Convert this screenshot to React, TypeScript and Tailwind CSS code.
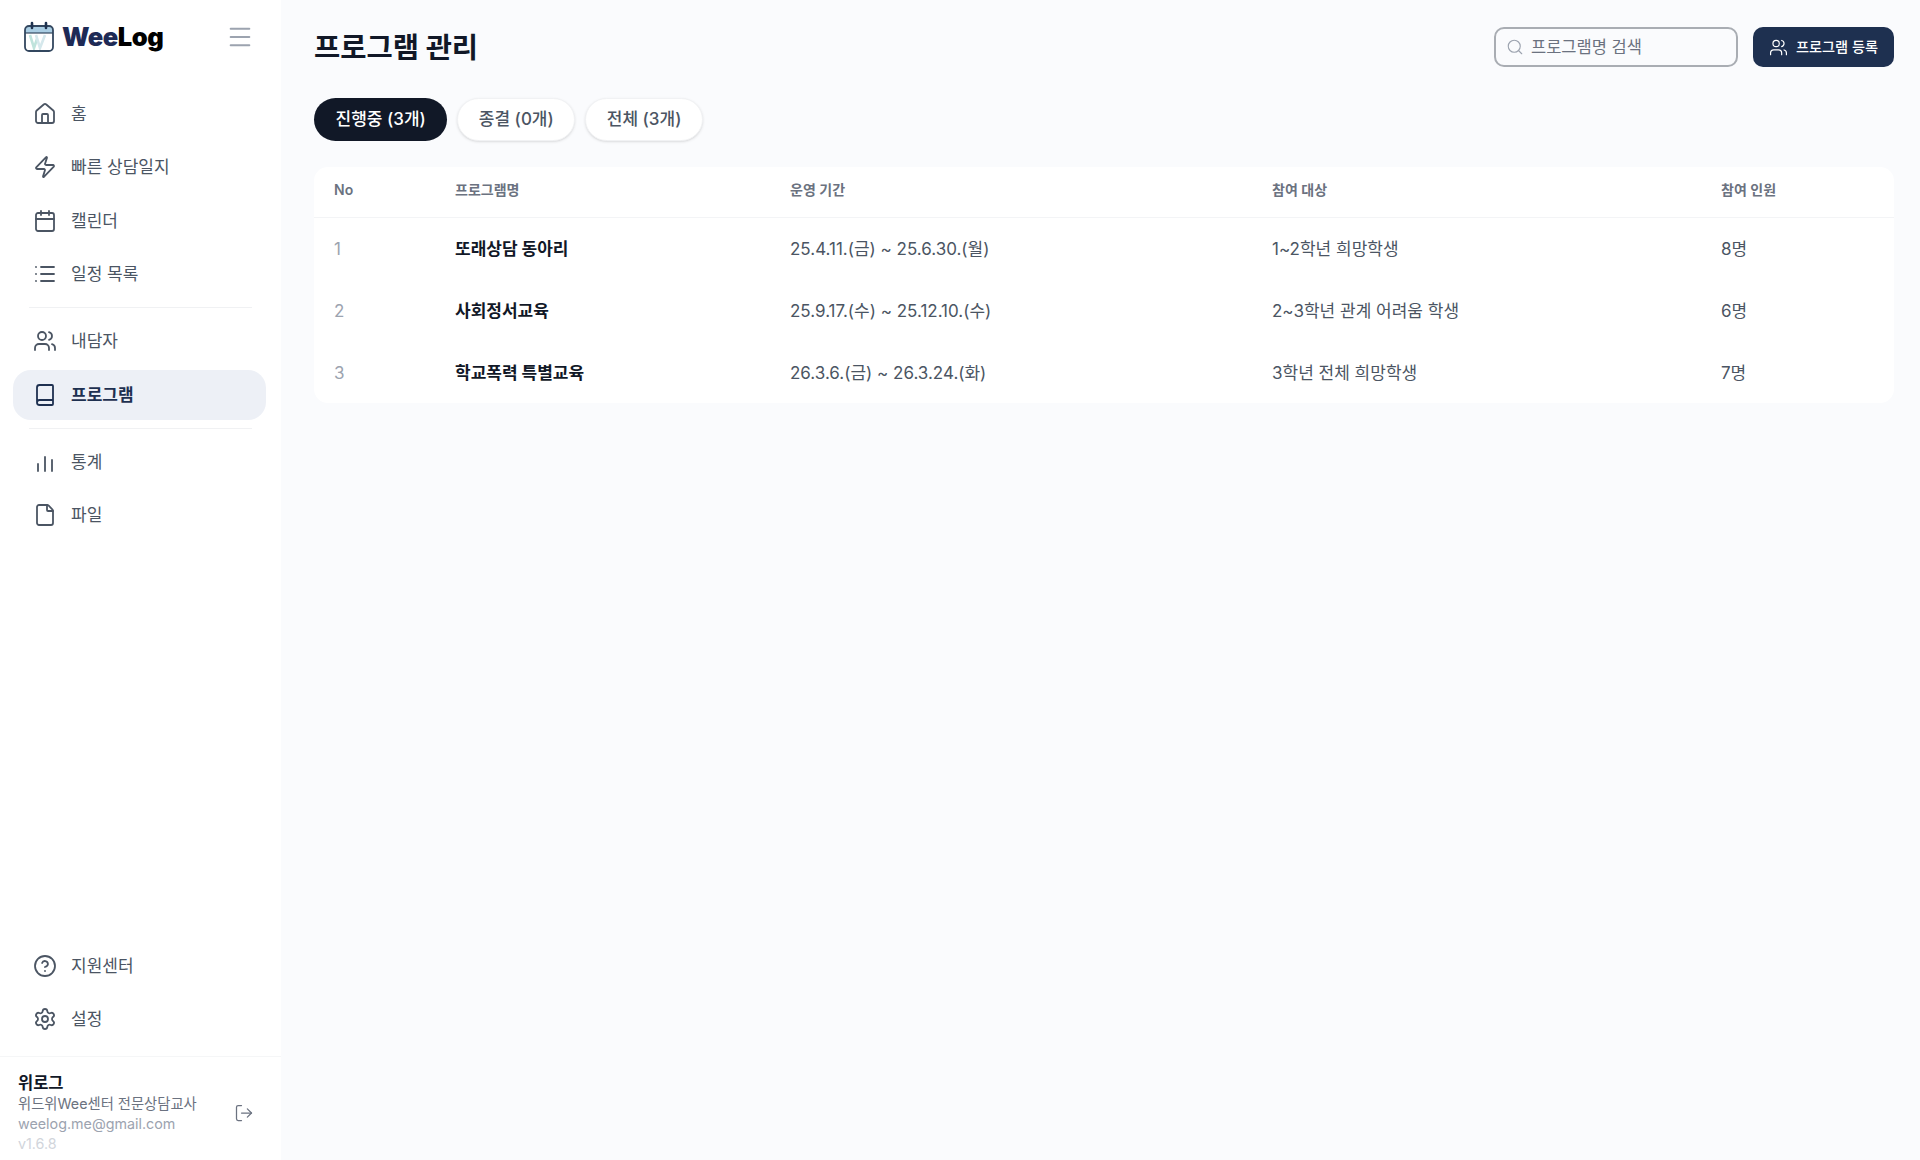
import { Book, Calendar, CircleHelp, File, House, List, LogOut, Menu, Search, Settings, Users, Zap } from 'lucide-react';
import type { ReactNode } from 'react';

const programs = [
  { no: 1, name: '또래상담 동아리', period: '25.4.11.(금) ~ 25.6.30.(월)', target: '1~2학년 희망학생', count: '8명' },
  { no: 2, name: '사회정서교육', period: '25.9.17.(수) ~ 25.12.10.(수)', target: '2~3학년 관계 어려움 학생', count: '6명' },
  { no: 3, name: '학교폭력 특별교육', period: '26.3.6.(금) ~ 26.3.24.(화)', target: '3학년 전체 희망학생', count: '7명' },
];

function Logo() {
  return (
    <svg width="32" height="32" viewBox="0 0 32 32" fill="none">
      <path d="M2 9a4 4 0 0 1 4-4h20a4 4 0 0 1 4 4v3H2z" fill="#a9cde3" />
      <path d="M7 14l4 13 3-9" stroke="#bfe3dc" strokeWidth="2.6" />
      <path d="M13 14l4 13 5-13" stroke="#d5e8ec" strokeWidth="2.6" />
      <rect x="2" y="5" width="28" height="25" rx="4" stroke="#33475f" strokeWidth="1.8" />
      <path d="M2 12h28" stroke="#33475f" strokeWidth="1.2" />
      <path d="M9 2v5M23 2v5" stroke="#1f3350" strokeWidth="2.6" strokeLinecap="round" />
    </svg>
  );
}

function BarsIcon() {
  return (
    <svg width="24" height="24" viewBox="0 0 24 24" fill="none" stroke="currentColor" strokeWidth="1.8" strokeLinecap="round">
      <path d="M5 21v-7M12 21V7M19 21V10" />
    </svg>
  );
}

function NavItem({ icon, label, active }: { icon: ReactNode; label: string; active?: boolean }) {
  return (
    <div className={`flex h-[50px] items-center gap-[14px] rounded-[18px] pl-[20px] text-[17px] ${active ? 'bg-[#edf0f6] font-bold text-[#1e3050]' : 'text-[#4b5563]'}`}>
      <span className="flex w-[24px] justify-center">{icon}</span>
      <span className="pt-[2px]">{label}</span>
    </div>
  );
}

export default function App() {
  return (
    <div className="flex h-[1160px] bg-[#fafbfd] font-['Inter','Noto_Sans_CJK_KR',sans-serif] text-[#111827]">
      <aside className="flex w-[281px] shrink-0 flex-col bg-white">
        <div className="flex h-[72px] items-center justify-between pl-[23px] pr-[27px] pt-[1px]">
          <div className="flex items-center gap-[7px]">
            <Logo />
            <span className="pt-[2px] text-[25.5px] font-black tracking-[-0.5px] text-black"><span className="text-[#1e2a55]">Wee</span>Log</span>
          </div>
          <Menu size={28} strokeWidth={1.7} className="text-[#9ca3af]" />
        </div>

        <nav className="mt-[16.5px] flex flex-col gap-[3.5px] pl-[13px] pr-[15px]">
          <NavItem icon={<House size={24} strokeWidth={1.8} />} label="홈" />
          <NavItem icon={<Zap size={24} strokeWidth={1.8} />} label="빠른 상담일지" />
          <NavItem icon={<Calendar size={24} strokeWidth={1.8} />} label="캘린더" />
          <NavItem icon={<List size={24} strokeWidth={1.8} />} label="일정 목록" />
          <div className="ml-[16px] mr-[14px] my-[4.5px] h-px bg-[#f0f1f3]" />
          <NavItem icon={<Users size={24} strokeWidth={1.8} />} label="내담자" />
          <NavItem icon={<Book size={24} strokeWidth={1.8} />} label="프로그램" active />
          <div className="ml-[16px] mr-[14px] my-[4.5px] h-px bg-[#f0f1f3]" />
          <NavItem icon={<BarsIcon />} label="통계" />
          <NavItem icon={<File size={24} strokeWidth={1.8} />} label="파일" />
        </nav>

        <nav className="mt-auto flex flex-col gap-[3.5px] pl-[13px] pr-[15px] pb-[12px]">
          <NavItem icon={<CircleHelp size={24} strokeWidth={1.8} />} label="지원센터" />
          <NavItem icon={<Settings size={24} strokeWidth={1.8} />} label="설정" />
        </nav>

        <div className="flex h-[104px] items-center justify-between border-t border-[#f5f6f7] pl-[18px] pr-[27px]">
          <div className="flex flex-col pt-[7px]">
            <span className="text-[16.5px] leading-[22px] font-bold text-[#111827]">위로그</span>
            <span className="text-[14.3px] leading-[20px] text-[#6b7280]">위드위Wee센터 전문상담교사</span>
            <span className="text-[14.3px] leading-[20px] text-[#9ca3af]">weelog.me@gmail.com</span>
            <span className="text-[14.3px] leading-[19px] text-[#d1d5db]">v1.6.8</span>
          </div>
          <LogOut size={20} strokeWidth={1.5} className="mt-[8px] text-[#6b7280]" />
        </div>
      </aside>

      <main className="flex min-w-0 flex-1 flex-col pl-[33px] pr-[26px] pt-[27px]">
        <header className="flex h-[40px] items-center justify-between">
          <h1 className="pt-[2px] text-[28.5px] font-bold text-[#111827]">프로그램 관리</h1>
          <div className="flex items-center gap-[15px]">
            <div className="flex h-[40px] w-[244px] items-center gap-[7px] rounded-[10px] border-2 border-[#a9adb3] pl-[10px] text-[16.5px] text-[#6b7280]">
              <Search size={18} strokeWidth={1.5} className="text-[#9ca3af]" />
              프로그램명 검색
            </div>
            <button className="flex h-[40px] w-[141px] items-center justify-center gap-[8px] rounded-[10px] bg-[#1e3050] text-[14.2px] font-medium text-white">
              <Users size={19} strokeWidth={1.5} />
              프로그램 등록
            </button>
          </div>
        </header>

        <div className="mt-[31px] flex gap-[10px]">
          <button className="h-[43px] rounded-full bg-[#111827] px-[21.5px] pt-[1px] text-[17px] font-medium text-white">진행중 (3개)</button>
          <button className="h-[43px] rounded-full border border-[#f1f2f4] bg-white px-[20.5px] pt-[1px] text-[17px] font-medium text-[#4b5563] shadow-sm">종결 (0개)</button>
          <button className="h-[43px] rounded-full border border-[#f1f2f4] bg-white px-[20.5px] pt-[1px] text-[17px] font-medium text-[#4b5563] shadow-sm">전체 (3개)</button>
        </div>

        <div className="mt-[26px] overflow-hidden rounded-[14px] bg-white">
          <table className="w-full table-fixed text-left">
            <thead>
              <tr className="h-[50px] border-b border-[#f3f4f6] text-sm text-[#6b7280]">
                <th className="w-[141px] pb-[3px] pl-[20px] font-semibold">No</th>
                <th className="w-[335px] pb-[3px] font-semibold">프로그램명</th>
                <th className="w-[482px] pb-[3px] font-semibold">운영 기간</th>
                <th className="w-[449px] pb-[3px] font-semibold">참여 대상</th>
                <th className="pb-[3px] font-semibold">참여 인원</th>
              </tr>
            </thead>
            <tbody>
              {programs.map((p) => (
                <tr key={p.no} className="h-[62px] text-[17px] text-[#4b5563]">
                  <td className="pl-[20px] pt-[3px] text-[#9ca3af]">{p.no}</td>
                  <td className="pt-[3px] font-bold text-[#111827]">{p.name}</td>
                  <td className="pt-[3px]">{p.period}</td>
                  <td className="pt-[3px]">{p.target}</td>
                  <td className="pt-[3px]">{p.count}</td>
                </tr>
              ))}
            </tbody>
          </table>
        </div>
      </main>
    </div>
  );
}
